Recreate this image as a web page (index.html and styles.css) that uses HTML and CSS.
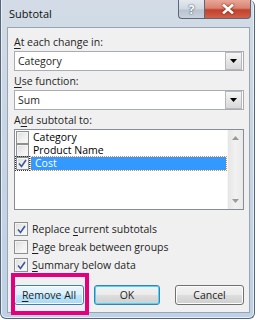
FILE: index.html
```html
<!DOCTYPE HTML>
<html>

<head>
    <title>Subtotal</title>
    <meta name="viewport" content="width=device-width, initial-scale=1">
    <link rel="stylesheet" href="styles.css">
</head>

<body>
    <div class="window">
        <!-- Title bar -->
        <div class="titlebar">
            <span class="title">Subtotal</span>
            <div class="caption-buttons">
                <span class="cap cap-help">?</span>
                <span class="cap cap-close">
                    <svg width="12" height="10" viewBox="0 0 12 10">
                        <path d="M2 1.5 L10 8.5 M10 1.5 L2 8.5" stroke="#fff" stroke-width="2.6" stroke-linecap="square" />
                    </svg>
                </span>
            </div>
        </div>

        <!-- Client area -->
        <div class="client">
            <div class="field-label"><u>A</u>t each change in:</div>
            <div class="combo">
                <span class="combo-text">Category</span>
                <span class="combo-btn"><svg width="7" height="4" viewBox="0 0 7 4"><path d="M0 0 H7 L3.5 4 Z" fill="#000" /></svg></span>
            </div>

            <div class="field-label"><u>U</u>se function:</div>
            <div class="combo">
                <span class="combo-text">Sum</span>
                <span class="combo-btn"><svg width="7" height="4" viewBox="0 0 7 4"><path d="M0 0 H7 L3.5 4 Z" fill="#000" /></svg></span>
            </div>

            <div class="field-label">A<u>d</u>d subtotal to:</div>
            <div class="listbox">
                <div class="list-items">
                    <div class="item"><span class="cb"></span><span class="item-text">Category</span></div>
                    <div class="item"><span class="cb"></span><span class="item-text">Product Name</span></div>
                    <div class="item item-selected">
                        <span class="cb cb-checked focus"><svg width="9" height="9" viewBox="0 0 9 9"><path d="M1 4.5 L3.5 7.5 L8 1" fill="none" stroke="#3b5a9a" stroke-width="1.6" /></svg></span>
                        <span class="item-text">Cost</span>
                    </div>
                </div>
                <div class="scrollbar">
                    <svg width="7" height="4" viewBox="0 0 7 4"><path d="M0 4 H7 L3.5 0 Z" fill="#9a9a9a" /></svg>
                    <svg width="7" height="4" viewBox="0 0 7 4"><path d="M0 0 H7 L3.5 4 Z" fill="#9a9a9a" /></svg>
                </div>
            </div>

            <div class="options">
                <div class="opt">
                    <span class="cb cb-checked"><svg width="9" height="9" viewBox="0 0 9 9"><path d="M1 4.5 L3.5 7.5 L8 1" fill="none" stroke="#3b5a9a" stroke-width="1.6" /></svg></span>
                    <span>Replace <u>c</u>urrent subtotals</span>
                </div>
                <div class="opt">
                    <span class="cb"></span>
                    <span><u>P</u>age break between groups</span>
                </div>
                <div class="opt">
                    <span class="cb cb-checked"><svg width="9" height="9" viewBox="0 0 9 9"><path d="M1 4.5 L3.5 7.5 L8 1" fill="none" stroke="#3b5a9a" stroke-width="1.6" /></svg></span>
                    <span><u>S</u>ummary below data</span>
                </div>
            </div>

            <div class="buttons">
                <button class="btn btn-remove"><u>R</u>emove All</button>
                <button class="btn btn-ok">OK</button>
                <button class="btn btn-cancel">Cancel</button>
            </div>
        </div>

        <!-- Pink callout around Remove All -->
        <div class="callout"></div>
    </div>
</body>

</html>
```

FILE: styles.css
```css
html {
    font-family: "Open Sans", "Noto Sans", sans-serif;
    font-size: 10.5px;
    color: #1e1e1e;
}

body {
    margin: 0;
    background-color: #fff;
}

u {
    text-decoration-thickness: 1px;
    text-underline-offset: 2px;
}

.window {
    position: relative;
    width: 253px;
    height: 318px;
    display: flex;
    flex-direction: column;
    border: 1px solid #56667a;
    border-top: none;
    border-radius: 0 6px 6px 6px;
    background: linear-gradient(180deg, #d3dce6 0%, #c8d5e4 40%, #bfd1e7 100%);
    box-shadow: inset 1px 0 0 #e8eef6, inset -1px 0 0 #e8eef6, inset 0 -1px 0 #e8eef6;
}

/* Title bar */
.titlebar {
    height: 27px;
    display: flex;
    justify-content: space-between;
    align-items: flex-start;
}

.title {
    font-size: 11px;
    color: #111;
    padding: 6px 0 0 8px;
}

.caption-buttons {
    display: flex;
    margin-right: 3px;
}

.cap {
    height: 18px;
    display: flex;
    align-items: center;
    justify-content: center;
    border: 1px solid #5c6878;
    border-top: none;
}

.cap-help {
    width: 25px;
    border-radius: 0 0 0 4px;
    border-right: none;
    background: linear-gradient(180deg, #e4e9ef 0%, #cfd7e0 50%, #b9c3cf 55%, #c8d1dc 100%);
    color: #fff;
    font-weight: bold;
    font-size: 12px;
    text-shadow: 0 0 2px #49566a, 0 0 1px #49566a;
}

.cap-close {
    width: 45px;
    border-radius: 0 0 4px 0;
    background: linear-gradient(180deg, #e8a798 0%, #d98370 45%, #c2412c 55%, #d0604a 100%);
}

.cap-close svg {
    filter: drop-shadow(0 0 1px #6a1a10);
}

/* Client area */
.client {
    flex: 1;
    margin: 0 4px 5px 6px;
    padding: 7px 5px 0 6px;
    background-color: #f0f0f0;
    border: 1px solid #9aa5b3;
    display: flex;
    flex-direction: column;
}

.field-label {
    height: 15px;
    line-height: 15px;
    margin-bottom: 1px;
}

.combo {
    height: 18px;
    margin-bottom: 3px;
    display: flex;
    align-items: center;
    background-color: #fff;
    border: 1px solid #a9acb3;
}

.combo-text {
    flex: 1;
    padding-left: 3px;
}

.combo-btn {
    width: 15px;
    height: 16px;
    margin-right: 1px;
    display: flex;
    align-items: center;
    justify-content: center;
    border: 1px solid #b5b7bb;
    background: linear-gradient(180deg, #f6f6f6 0%, #e6e6e6 50%, #d8d8d8 100%);
}

/* List box */
.listbox {
    width: 228px;
    height: 79px;
    display: flex;
    background-color: #fff;
    border: 1px solid #888c94;
}

.list-items {
    flex: 1;
    padding-top: 1px;
}

.item {
    height: 13px;
    display: flex;
    align-items: center;
    padding-left: 1px;
}

.item .cb {
    margin-right: 2px;
}

.item-text {
    height: 13px;
    line-height: 13px;
    padding-left: 2px;
    color: #000;
}

.item-selected .item-text {
    flex: 1;
    margin-right: 1px;
    padding-left: 4px;
    background-color: #3399ff;
    color: #fff;
    outline: 1px dotted #e08a3a;
}

.cb {
    width: 11px;
    height: 11px;
    flex: none;
    display: flex;
    align-items: center;
    justify-content: center;
    border: 1px solid #8e8f8f;
    background: linear-gradient(135deg, #dcdcdc 0%, #f2f2f2 60%, #fafafa 100%);
    box-shadow: inset 0 0 0 1px #f4f4f4;
}

.focus {
    outline: 1px dotted #333;
}

.scrollbar {
    width: 15px;
    display: flex;
    flex-direction: column;
    justify-content: space-between;
    align-items: center;
    padding: 6px 0 6px;
    background: linear-gradient(90deg, #e6e6e6 0%, #f1f1f1 50%, #e9e9e9 100%);
    border-left: 1px solid #f8f8f8;
}

/* Option checkboxes */
.options {
    margin-top: 10px;
    display: flex;
    flex-direction: column;
}

.opt {
    height: 18px;
    display: flex;
    align-items: center;
    gap: 4px;
    color: #1e1e1e;
}

.opt .cb {
    width: 12px;
    height: 12px;
}

/* Buttons */
.buttons {
    margin-top: 11px;
    display: flex;
}

.btn {
    height: 20px;
    padding: 0;
    font-family: inherit;
    font-size: 10.5px;
    color: #1e1e1e;
    border: 1px solid #707070;
    border-radius: 3px;
    background: linear-gradient(180deg, #f2f2f2 0%, #ebebeb 48%, #dddddd 52%, #cfcfcf 100%);
    box-shadow: inset 0 0 0 1px #fcfcfc;
}

.btn-remove {
    width: 70px;
    border-color: #3c7fb1;
    background: linear-gradient(180deg, #eaf6fd 0%, #d9f0fc 48%, #bee6fd 52%, #a7d9f5 100%);
}

.btn-ok {
    width: 66px;
    margin-left: 10px;
    border-color: #3c7fb1;
    box-shadow: inset 0 0 0 1px #48d6fb;
}

.btn-cancel {
    width: 69px;
    margin-left: 15px;
}

/* Pink annotation rectangle */
.callout {
    position: absolute;
    left: 10px;
    top: 273px;
    width: 70px;
    height: 34px;
    border: 4px solid #e4007c;
}
```
